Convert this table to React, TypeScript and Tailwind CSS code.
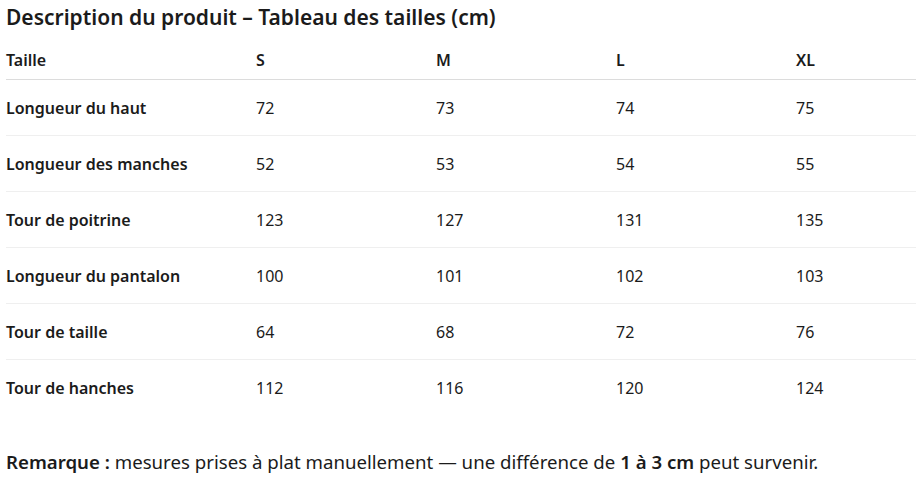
import React from "react";

const rows: [string, number[]][] = [
  ["Longueur du haut", [72, 73, 74, 75]],
  ["Longueur des manches", [52, 53, 54, 55]],
  ["Tour de poitrine", [123, 127, 131, 135]],
  ["Longueur du pantalon", [100, 101, 102, 103]],
  ["Tour de taille", [64, 68, 72, 76]],
  ["Tour de hanches", [112, 116, 120, 124]],
];

export default function App() {
  return (
    <div
      className="bg-white text-[#1b1b1b] pl-[6px] pr-[1px] w-[917px] h-[485px]"
      style={{ fontFamily: '"Segoe UI", "Noto Sans", "Open Sans", sans-serif' }}
    >
      <div className="h-[36px] flex items-center text-[21px] font-semibold">
        Description du produit – Tableau des tailles (cm)
      </div>
      <div className="mt-[4px] h-[40px] flex items-center border-b border-[#dcdcdc] text-[16px] font-semibold">
        <div className="w-[250px]">Taille</div>
        <div className="w-[180px]">S</div>
        <div className="w-[180px]">M</div>
        <div className="w-[180px]">L</div>
        <div className="flex-1">XL</div>
      </div>
      {rows.map(([label, vals], i) => (
        <div
          key={label}
          className={`h-[56px] flex items-center text-[16px] ${
            i < rows.length - 1 ? "border-b border-[#efefef]" : ""
          }`}
        >
          <div className="w-[250px] font-semibold">{label}</div>
          {vals.map((v, j) => (
            <div key={j} className={j === 3 ? "flex-1" : "w-[180px]"}>
              {v}
            </div>
          ))}
        </div>
      ))}
      <p className="mt-[33px] text-[18.65px] leading-[26px] whitespace-nowrap">
        <span className="font-semibold">Remarque :</span> mesures prises à plat
        manuellement — une différence de{" "}
        <span className="font-semibold">1 à 3 cm</span> peut survenir.
      </p>
    </div>
  );
}
